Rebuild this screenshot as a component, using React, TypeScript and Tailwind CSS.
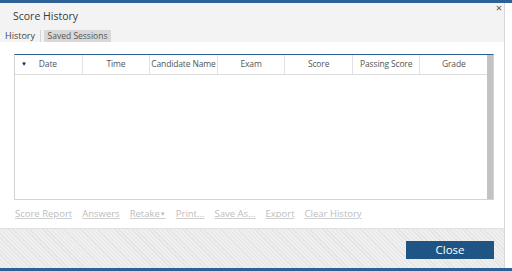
import React from "react";

const cols = ["Date", "Time", "Candidate Name", "Exam", "Score", "Passing Score", "Grade"];
const actions = ["Score Report", "Answers", "Retake", "Print...", "Save As...", "Export", "Clear History"];

export default function App() {
  return (
    <div
      className="relative w-[512px] h-[271px] flex flex-col bg-white overflow-hidden"
      style={{ fontFamily: '"Open Sans", "Noto Sans", sans-serif' }}
    >
      <div className="h-[3px] bg-[#2d6096]" />
      <div className="flex-1 flex flex-row">
        <div className="w-[505px] flex flex-col border-r border-[#d8d8d8]">
          {/* header */}
          <div className="h-[39px] bg-[#f3f3f3] flex flex-col pl-[2px]">
            <div className="h-[27px] flex items-center pl-[11px] text-[10.5px] text-[#3a3a3a]">Score History</div>
            <div className="flex flex-row items-end h-[12px]">
              <div className="h-[12px] px-[3px] flex items-center text-[9px] text-[#444] border-r border-[#d6d6d6] pr-[5px]">History</div>
              <div className="ml-[3px] h-[12px] w-[67px] bg-[#d8d8d8] flex items-center justify-center text-[8.5px] text-[#555]">Saved Sessions</div>
            </div>
          </div>
          {/* body */}
          <div className="h-[186px] bg-white flex flex-col pl-[14px] pt-[12px]">
            <div className="w-[480px] h-[146px] flex flex-row border border-[#d3d3d3] border-t-[#2d6096]">
              <div className="flex-1 flex flex-col">
                <div className="h-[20px] flex flex-row border-b border-[#dedede]">
                  {cols.map((c, i) => (
                    <div
                      key={c}
                      className={
                        "flex-1 flex items-center justify-center text-[8.5px] text-[#555] tracking-[-0.15px] " +
                        (i < cols.length - 1 ? "border-r border-[#e2e2e2]" : "")
                      }
                    >
                      {i === 0 ? (
                        <div className="w-full flex items-center pl-[6px] gap-[12px]">
                          <span className="text-[6px] text-[#223]">▼</span>
                          <span>{c}</span>
                        </div>
                      ) : (
                        c
                      )}
                    </div>
                  ))}
                </div>
              </div>
              <div className="w-[6px] bg-[#c3c3c3]" />
            </div>
            <div className="flex flex-row items-center h-[28px] text-[9.5px] text-[#bdbdbd] pl-[1px]">
              {actions.map((a, i) => (
                <span key={a} className={"underline decoration-[#cfcfcf] " + (i === 0 ? "" : "ml-[10px]")}>
                  {a}
                  {a === "Retake" ? <span className="text-[6px] no-underline align-middle">▼</span> : null}
                </span>
              ))}
            </div>
          </div>
          {/* footer */}
          <div className="h-[40px] flex flex-row justify-end items-start pt-[12px] pr-[10px] bg-[repeating-linear-gradient(45deg,#e4e4e4_0px,#e4e4e4_1px,#efefef_1px,#efefef_3px)] border-t border-[#e0e0e0]">
            <div className="w-[88px] h-[18px] bg-[#1f5585] flex items-center justify-center text-white text-[11.5px]">Close</div>
          </div>
        </div>
        <div className="flex-1 bg-white" />
      </div>
      <div className="h-[3px] bg-[#2d6096]" />
      <div className="absolute right-[10px] top-[2px] text-[11px] leading-none text-[#555]">×</div>
    </div>
  );
}
